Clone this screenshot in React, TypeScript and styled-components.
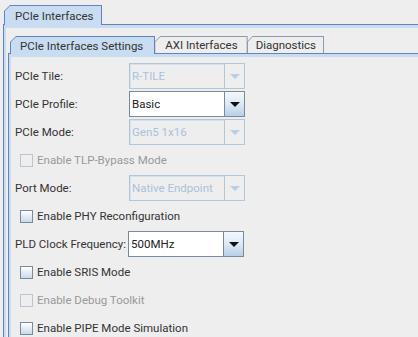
import React from "react";
import styled, { createGlobalStyle, css } from "styled-components";

const Global = createGlobalStyle`
  html, body { margin: 0; padding: 0; background: #eeeeee; }
  body { font-family: Roboto, "Liberation Sans", Arial, sans-serif; font-size: 11.5px; color: #333333; }
`;

const DARK = "#6382bf";
const LIGHT = "#c8ddf2";
const GRAY_BORDER = "#7a8a99";

const Screen = styled.div`
  width: 418px;
  height: 337px;
  overflow: hidden;
  background: #eeeeee;
  padding: 5px 0 0 3px;
  box-sizing: border-box;
`;

const TabbedPane = styled.div<{ $width: number }>`
  display: flex;
  flex-direction: column;
  width: ${(p) => p.$width}px;
`;

const TabStrip = styled.div<{ $inset: number }>`
  display: flex;
  align-items: flex-end;
  padding-left: ${(p) => p.$inset}px;
`;

const shape = (c: number) => css`
  clip-path: polygon(0 ${c}px, ${c}px 0, 100% 0, 100% 100%, 0 100%);
`;

const Tab = styled.div<{ $selected?: boolean; $height: number; $overlap?: boolean }>`
  position: relative;
  z-index: ${(p) => (p.$selected ? 2 : 1)};
  background: ${(p) => (p.$selected ? DARK : "#8c9bab")};
  ${shape(6)}
  padding: 1px 1px 0 1px;
  height: ${(p) => p.$height}px;
  box-sizing: border-box;
  margin-bottom: ${(p) => (p.$selected ? -1 : 0)}px;
  margin-left: ${(p) => (p.$overlap ? -1 : 0)}px;
  display: flex;
`;

const TabFace = styled.div<{ $selected?: boolean; $pl: number; $pr: number }>`
  flex: 1;
  ${shape(5)}
  background: ${(p) => (p.$selected ? LIGHT : "#eeeeee")};
  padding: 0 ${(p) => p.$pr}px 0 ${(p) => p.$pl}px;
  display: flex;
  align-items: center;
  white-space: nowrap;
  color: #333333;
`;

const Panel = styled.div`
  border-top: 1px solid ${DARK};
  border-left: 1px solid ${DARK};
  flex: 1;
`;

const PanelInner = styled.div<{ $top: number; $left: number }>`
  border-top: ${(p) => p.$top}px solid ${LIGHT};
  border-left: ${(p) => p.$left}px solid ${LIGHT};
  background: #eeeeee;
  height: 100%;
  box-sizing: border-box;
`;

const OuterContent = styled.div`
  padding: 8px 0 0 2px;
`;

const Form = styled.div`
  display: flex;
  flex-direction: column;
  gap: 2px;
  padding: 6px 0 0 4px;
`;

const Row = styled.div`
  display: flex;
  align-items: center;
  height: 26px;
`;

const Label = styled.div<{ $w: number }>`
  width: ${(p) => p.$w}px;
  flex: none;
  white-space: nowrap;
  color: #333333;
`;

const Combo = styled.div`
  display: flex;
  width: 116px;
  height: 26px;
  box-sizing: border-box;
`;

const ComboField = styled.div<{ $disabled?: boolean }>`
  flex: 1;
  border: 1px solid ${(p) => (p.$disabled ? "#b3c5d8" : GRAY_BORDER)};
  background: ${(p) => (p.$disabled ? "#eeeeee" : "#ffffff")};
  box-shadow: ${(p) => (p.$disabled ? "inset 1px 1px 0 #d4e2f0" : "none")};
  color: ${(p) => (p.$disabled ? "#a8c2dd" : "#222222")};
  display: flex;
  align-items: center;
  padding-left: 2px;
  white-space: nowrap;
  overflow: hidden;
`;

const ArrowButton = styled.div<{ $disabled?: boolean }>`
  width: 19px;
  flex: none;
  margin-left: -1px;
  border: 1px solid ${(p) => (p.$disabled ? "#b3c5d8" : GRAY_BORDER)};
  background: ${(p) =>
    p.$disabled ? "#eeeeee" : "linear-gradient(#f4f8fc 0%, #dde9f5 50%, #b8cfe5 100%)"};
  display: flex;
  align-items: center;
  justify-content: center;
`;

const Triangle = styled.div<{ $disabled?: boolean }>`
  width: 0;
  height: 0;
  border-left: 5px solid transparent;
  border-right: 5px solid transparent;
  border-top: 5px solid ${(p) => (p.$disabled ? "#b8cfe5" : "#111111")};
`;

const CheckRow = styled.div`
  display: flex;
  align-items: center;
  height: 26px;
  padding-left: 5px;
  gap: 4px;
`;

const Box = styled.div<{ $disabled?: boolean }>`
  width: 13px;
  height: 13px;
  box-sizing: border-box;
  border: 1px solid ${(p) => (p.$disabled ? "#b8c5d2" : GRAY_BORDER)};
  background: ${(p) => (p.$disabled ? "transparent" : "linear-gradient(#ffffff, #c8daea)")};
`;

const CheckText = styled.span<{ $disabled?: boolean }>`
  color: ${(p) => (p.$disabled ? "#999999" : "#333333")};
  white-space: nowrap;
`;

function ComboBox({ value, disabled }: { value: string; disabled?: boolean }) {
  return (
    <Combo>
      <ComboField $disabled={disabled}>{value}</ComboField>
      <ArrowButton $disabled={disabled}>
        <Triangle $disabled={disabled} />
      </ArrowButton>
    </Combo>
  );
}

function FieldRow({ label, value, disabled, w = 114 }: { label: string; value: string; disabled?: boolean; w?: number }) {
  return (
    <Row>
      <Label $w={w}>{label}</Label>
      <ComboBox value={value} disabled={disabled} />
    </Row>
  );
}

function Check({ label, disabled }: { label: string; disabled?: boolean }) {
  return (
    <CheckRow>
      <Box $disabled={disabled} />
      <CheckText $disabled={disabled}>{label}</CheckText>
    </CheckRow>
  );
}

export default function App() {
  return (
    <>
      <Global />
      <Screen>
        <TabbedPane $width={440}>
          <TabStrip $inset={1}>
            <Tab $selected $height={20}>
              <TabFace $selected $pl={10} $pr={8}>PCIe Interfaces</TabFace>
            </Tab>
          </TabStrip>
          <Panel>
            <PanelInner $top={3} $left={2}>
              <OuterContent>
                <TabbedPane $width={440}>
                  <TabStrip $inset={2}>
                    <Tab $selected $height={18}>
                      <TabFace $selected $pl={9} $pr={11}>PCIe Interfaces Settings</TabFace>
                    </Tab>
                    <Tab $height={17} $overlap>
                      <TabFace $pl={10} $pr={9}>AXI Interfaces</TabFace>
                    </Tab>
                    <Tab $height={17} $overlap>
                      <TabFace $pl={8} $pr={7}>Diagnostics</TabFace>
                    </Tab>
                  </TabStrip>
                  <Panel>
                    <PanelInner $top={3} $left={2}>
                      <Form>
                        <FieldRow label="PCIe Tile:" value="R-TILE" disabled />
                        <FieldRow label="PCIe Profile:" value="Basic" />
                        <FieldRow label="PCIe Mode:" value="Gen5 1x16" disabled />
                        <Check label="Enable TLP-Bypass Mode" disabled />
                        <FieldRow label="Port Mode:" value="Native Endpoint" disabled />
                        <Check label="Enable PHY Reconfiguration" />
                        <FieldRow label="PLD Clock Frequency:" value="500MHz" w={113} />
                        <Check label="Enable SRIS Mode" />
                        <Check label="Enable Debug Toolkit" disabled />
                        <Check label="Enable PIPE Mode Simulation" />
                      </Form>
                    </PanelInner>
                  </Panel>
                </TabbedPane>
              </OuterContent>
            </PanelInner>
          </Panel>
        </TabbedPane>
      </Screen>
    </>
  );
}
